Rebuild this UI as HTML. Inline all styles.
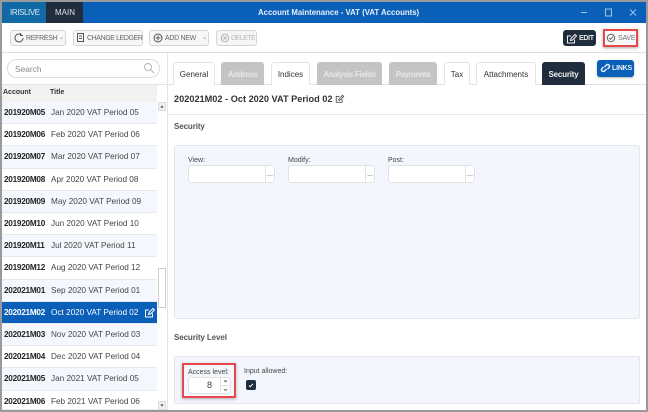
<!DOCTYPE html>
<html><head><meta charset="utf-8"><style>
*{box-sizing:border-box;margin:0;padding:0}
html,body{width:648px;height:412px;overflow:hidden;background:#fff}
body{position:relative;font-family:"Liberation Sans",sans-serif;color:#333;font-size:8px}
#w{position:absolute;left:0;top:0;width:648px;height:412px;filter:blur(.3px);background:#fff}
.a{position:absolute}
.t{position:absolute;white-space:nowrap;line-height:10px}
.btn{position:absolute;height:16px;border:1px solid #d6d6d6;border-radius:3px;background:#f7f7f7;color:#666;font-size:7px;letter-spacing:-.3px;line-height:15px;white-space:nowrap}
.tab{position:absolute;top:62px;height:23px;border:1px solid #e4e4e4;border-bottom:0;border-radius:3px 3px 0 0;background:#fff;text-align:center;font-size:8px;line-height:24px;color:#333}
.tab.d{background:#c4c4c4;border-color:#c4c4c4;color:#e6e6e6;font-weight:700;font-size:8px;letter-spacing:-.4px}
.row{position:absolute;left:2px;width:155px;height:22.2px;border-bottom:1px solid #e6e9ee;font-size:8.2px;line-height:21px;color:#444;white-space:nowrap}
.row b{position:absolute;left:2px;color:#222;font-size:8.2px;letter-spacing:-.25px}
.row span{position:absolute;left:49px}
.row.alt{background:#f4f8fe}
.row.sel{background:#0a5fb8;color:#fff}
.row.sel b{color:#fff}
.panel{position:absolute;left:174px;width:466px;background:#f3f7fd;border:1px solid #e4e6ea;border-radius:2px}
.inp{position:absolute;top:165px;width:87px;height:18px;background:#fff;border:1px solid #dfe1e5;border-radius:3px}
.inp i{position:absolute;right:0;top:0;width:9px;height:16px;border-left:1px solid #dfe1e5;font-style:normal;font-size:7px;line-height:17px;text-align:center;color:#444}
.lbl{position:absolute;font-size:7px;line-height:9px;color:#444;white-space:nowrap}
</style></head><body><div id="w">

<div class="a" style="left:2px;top:2px;width:644px;height:21px;background:#0a5fb8"></div>
<div class="a" style="left:2px;top:2px;width:44px;height:21px;background:#0f6aa6"></div>
<div class="a" style="left:46px;top:2px;width:37px;height:21px;background:#1f2d3d"></div>
<div class="t" style="left:10px;top:8px;font-size:8px;letter-spacing:-.4px;color:#dfe9f2">IRISLIVE</div>
<div class="t" style="left:55px;top:8px;font-size:8px;color:#dfe3e8">MAIN</div>
<div class="t" style="left:258px;top:8px;font-size:7.8px;font-weight:700;color:#e8f0fa">Account Maintenance - VAT (VAT Accounts)</div>
<svg class="a" style="left:575px;top:5px" width="70" height="16" fill="none" stroke="#9fc3ea" stroke-width="1">
<path d="M6 7.5H12"/><rect x="30.5" y="4" width="6" height="7"/><path d="M55 4.5L61 10.5M61 4.5L55 10.5"/></svg>

<div class="a" style="left:2px;top:52px;width:644px;height:1px;background:#dedede"></div>

<div class="btn" style="left:10px;top:30px;width:56px;padding-left:15px">REFRESH</div>
<svg class="a" style="left:13px;top:32px" width="12" height="12" fill="none" stroke="#555" stroke-width="1"><path d="M8.5 2.8A4 4 0 1 0 10 6"/><path d="M7.5 1V3.5H10"/></svg>
<div class="t" style="left:59px;top:33px;font-size:6px;color:#888">⌄</div>
<div class="btn" style="left:73px;top:30px;width:70px;padding-left:13px;letter-spacing:-.4px">CHANGE LEDGER</div>
<svg class="a" style="left:76px;top:32px" width="10" height="12" fill="none" stroke="#555" stroke-width="1"><rect x="1.5" y="1.5" width="6" height="8"/><path d="M3 4H6M3 6.5H6"/></svg>
<div class="btn" style="left:149px;top:30px;width:60px;padding-left:15px">ADD NEW</div>
<svg class="a" style="left:152px;top:32px" width="12" height="12" fill="none" stroke="#555" stroke-width="1"><circle cx="6" cy="6" r="4"/><path d="M6 3.5V8.5M3.5 6H8.5"/></svg>
<div class="t" style="left:202px;top:33px;font-size:6px;color:#888">⌄</div>
<div class="btn" style="left:216px;top:30px;width:41px;padding-left:14px;color:#b8b8b8;background:#f5f5f5;letter-spacing:-.5px">DELETE</div>
<svg class="a" style="left:219px;top:32px" width="12" height="12" fill="none" stroke="#b5b5b5" stroke-width="1"><circle cx="6" cy="6" r="3.7"/><path d="M4.5 4.5L7.5 7.5M7.5 4.5L4.5 7.5"/></svg>

<div class="btn" style="left:563px;top:30px;width:33px;background:#1f2d3d;border-color:#1f2d3d;color:#e8e8e8;padding-left:15px;font-weight:700;letter-spacing:-.3px">EDIT</div>
<svg class="a" style="left:566px;top:33px" width="11" height="11" fill="none" stroke="#eee" stroke-width="1"><path d="M8.5 6.5V10H1.5V3H5"/><path d="M4.5 7.5L5 5.5L9 1.5L10.5 3L6.5 7Z"/></svg>
<div class="a" style="left:603px;top:29px;width:35px;height:18px;border:2px solid #e8484c;box-shadow:0 1px 3px rgba(0,0,0,.35);background:#f8f8f8"></div>
<div class="t" style="left:618px;top:34px;font-size:7px;letter-spacing:-.2px;color:#777">SAVE</div>
<svg class="a" style="left:605px;top:32px" width="12" height="12" fill="none" stroke="#666" stroke-width="1"><circle cx="6" cy="6" r="3.7"/><path d="M4.2 6L5.6 7.4L8 4.6"/></svg>

<div class="a" style="left:7px;top:59px;width:153px;height:19px;border:1px solid #dcdcdc;border-radius:10px;background:#fff"></div>
<div class="t" style="left:15px;top:64px;font-size:8.4px;color:#8a8a8a">Search</div>
<svg class="a" style="left:143px;top:62px" width="12" height="12" fill="none" stroke="#b5b5b5" stroke-width="1"><circle cx="5" cy="5" r="3.5"/><path d="M7.5 7.5L11 11"/></svg>

<div class="a" style="left:167px;top:53px;width:1px;height:357px;background:#e4e4e4"></div>
<div class="a" style="left:168px;top:84px;width:478px;height:1px;background:#e2e2e2"></div>
<div class="a" style="left:2px;top:84px;width:165px;height:1px;background:#e2e2e2"></div>

<div class="tab" style="left:173px;width:42px">General</div>
<div class="tab d" style="left:221px;width:43px">Address</div>
<div class="tab" style="left:271px;width:39px">Indices</div>
<div class="tab d" style="left:317px;width:65px">Analysis Fields</div>
<div class="tab d" style="left:389px;width:48px">Payments</div>
<div class="tab" style="left:444px;width:26px">Tax</div>
<div class="tab" style="left:476px;width:60px">Attachments</div>
<div class="tab" style="left:542px;width:43px;background:#1f2d3d;border-color:#1f2d3d;color:#eee;font-weight:700;letter-spacing:-.2px">Security</div>
<div class="a" style="left:597px;top:60px;width:37px;height:17px;background:#0a5fb8;border-radius:3px;box-shadow:0 1px 2px rgba(0,0,0,.3)"></div>
<div class="t" style="left:612px;top:64px;font-size:7px;letter-spacing:-.2px;font-weight:700;color:#e8f0fa">LINKS</div>
<svg class="a" style="left:600px;top:62px" width="11" height="12" fill="none" stroke="#e8f0fa" stroke-width="1.5"><path d="M4.5 5L6.5 3A1.7 1.7 0 0 1 9 5.5L7.5 7"/><path d="M6.5 7L4.5 9A1.7 1.7 0 0 1 2 6.5L3.5 5"/></svg>

<div class="a" style="left:2px;top:85px;width:155px;height:17px;background:#f2f2f2"></div>
<div class="t" style="left:3px;top:88px;font-size:7px;font-weight:700;color:#333">Account</div>
<div class="t" style="left:50px;top:88px;font-size:7px;font-weight:700;color:#333">Title</div>

<div class="row alt" style="top:102px"><b>201920M05</b><span>Jan 2020 VAT Period 05</span></div>
<div class="row" style="top:124.2px"><b>201920M06</b><span>Feb 2020 VAT Period 06</span></div>
<div class="row alt" style="top:146.4px"><b>201920M07</b><span>Mar 2020 VAT Period 07</span></div>
<div class="row" style="top:168.6px"><b>201920M08</b><span>Apr 2020 VAT Period 08</span></div>
<div class="row alt" style="top:190.8px"><b>201920M09</b><span>May 2020 VAT Period 09</span></div>
<div class="row" style="top:213px"><b>201920M10</b><span>Jun 2020 VAT Period 10</span></div>
<div class="row alt" style="top:235.2px"><b>201920M11</b><span>Jul 2020 VAT Period 11</span></div>
<div class="row" style="top:257.4px"><b>201920M12</b><span>Aug 2020 VAT Period 12</span></div>
<div class="row alt" style="top:279.6px"><b>202021M01</b><span>Sep 2020 VAT Period 01</span></div>
<div class="row sel" style="top:301.8px"><b>202021M02</b><span>Oct 2020 VAT Period 02</span></div>
<svg class="a" style="left:144px;top:307px" width="12" height="12" fill="none" stroke="#fff" stroke-width="1"><path d="M8.5 6.5V10H1.5V3H5"/><path d="M4.5 7.5L5 5.5L9 1.5L10.5 3L6.5 7Z"/></svg>
<div class="row alt" style="top:324px"><b>202021M03</b><span>Nov 2020 VAT Period 03</span></div>
<div class="row" style="top:346.2px"><b>202021M04</b><span>Dec 2020 VAT Period 04</span></div>
<div class="row alt" style="top:368.4px"><b>202021M05</b><span>Jan 2021 VAT Period 05</span></div>
<div class="row" style="top:390.6px;height:19.4px"><b>202021M06</b><span>Feb 2021 VAT Period 06</span></div>

<div class="a" style="left:158px;top:102px;width:8px;height:9px;background:#f0f0f0;border:1px solid #ddd"></div>
<svg class="a" style="left:158px;top:102px" width="8" height="9"><path d="M2.5 5.5H5.5L4 3.5Z" fill="#222"/></svg>
<div class="a" style="left:158px;top:268px;width:8px;height:40px;background:#fff;border:1px solid #cfcfc8"></div>
<div class="a" style="left:158px;top:401px;width:8px;height:9px;background:#f0f0f0;border:1px solid #ddd"></div>
<svg class="a" style="left:158px;top:401px" width="8" height="9"><path d="M2.5 3.5H5.5L4 5.5Z" fill="#222"/></svg>

<div class="t" style="left:174px;top:94px;font-size:9.2px;font-weight:700;color:#333">202021M02 - Oct 2020 VAT Period 02</div>
<svg class="a" style="left:335px;top:94px" width="10" height="10" viewBox="0 0 12 12" fill="none" stroke="#555" stroke-width="1.1"><path d="M8.5 6.5V10H1.5V3H5"/><path d="M4.5 7.5L5 5.5L9 1.5L10.5 3L6.5 7Z"/></svg>
<div class="a" style="left:168px;top:114px;width:478px;height:1px;background:#e6e6e6"></div>

<div class="t" style="left:174px;top:122px;font-size:8px;letter-spacing:-.1px;font-weight:700;color:#555">Security</div>
<div class="panel" style="top:145px;height:174px"></div>
<div class="lbl" style="left:188px;top:156px">View:</div>
<div class="inp" style="left:188px"><i>...</i></div>
<div class="lbl" style="left:288px;top:156px">Modify:</div>
<div class="inp" style="left:288px"><i>...</i></div>
<div class="lbl" style="left:388px;top:156px">Post:</div>
<div class="inp" style="left:388px"><i>...</i></div>

<div class="t" style="left:174px;top:333px;font-size:8px;letter-spacing:-.1px;font-weight:700;color:#555">Security Level</div>
<div class="panel" style="top:356px;height:48px"></div>
<div class="a" style="left:182px;top:363px;width:54px;height:35px;border:2px solid #e8484c;box-shadow:0 1px 3px rgba(0,0,0,.3)"></div>
<div class="lbl" style="left:188px;top:368px">Access level:</div>
<div class="a" style="left:188px;top:377px;width:43px;height:17px;background:#fff;border:1px solid #dfe1e5;border-radius:3px"></div>
<div class="a" style="left:220px;top:377px;width:1px;height:17px;background:#dfe1e5"></div>
<div class="a" style="left:220px;top:385px;width:11px;height:1px;background:#dfe1e5"></div>
<div class="t" style="left:207px;top:380px;font-size:9px;color:#444">8</div>
<svg class="a" style="left:221px;top:377px" width="9" height="17" fill="none" stroke="#555" stroke-width=".8"><path d="M3 5L4.5 3.5L6 5M3 12L4.5 13.5L6 12"/></svg>
<div class="lbl" style="left:244px;top:367px">Input allowed:</div>
<div class="a" style="left:246px;top:380px;width:10px;height:10px;background:#1f2d3d;border-radius:2px"></div>
<svg class="a" style="left:246px;top:380px" width="10" height="10" fill="none" stroke="#fff" stroke-width="1"><path d="M3 5.5L4.3 6.8L7 3.8"/></svg>

<div class="a" style="left:0;top:0;width:648px;height:412px;border:2px solid #9a9a9a"></div>
</div></body></html>
